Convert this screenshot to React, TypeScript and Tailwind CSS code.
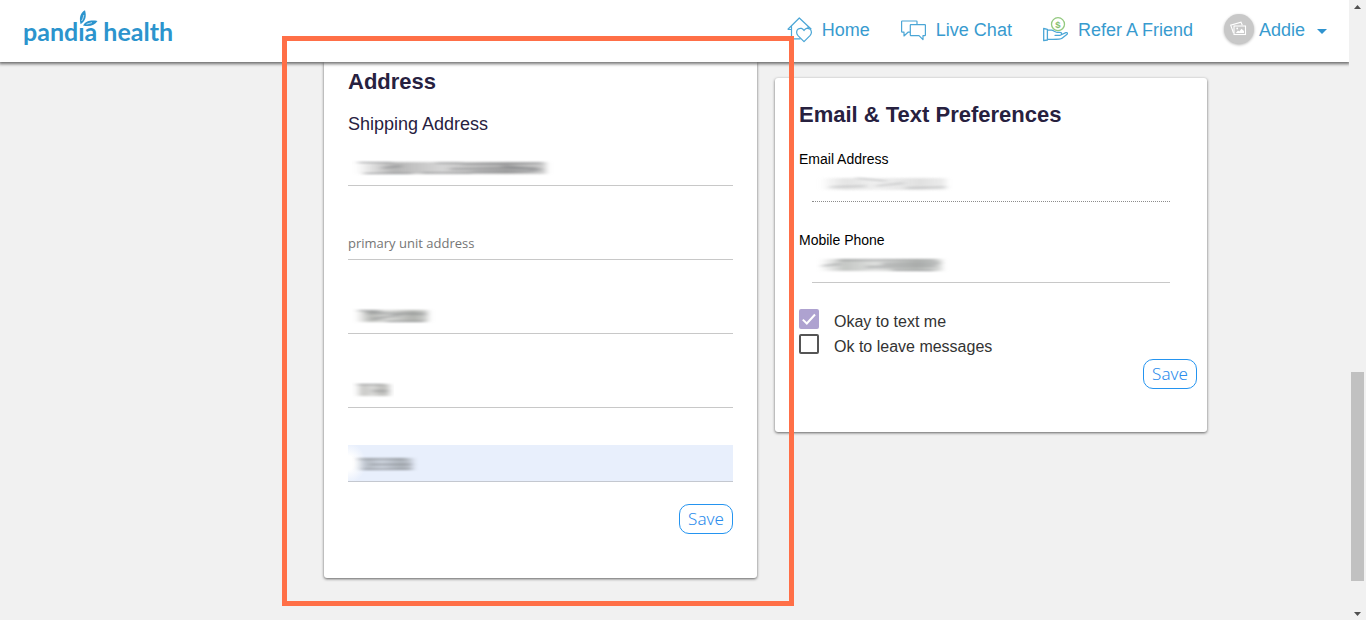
import React from "react";

const sans = "font-['Liberation_Sans',Arial,sans-serif]";

function Logo() {
  return (
    <a href="#" className="relative mt-0.5 flex items-center text-[#2c94cd]">
      <span className="font-['Lato',sans-serif] text-[25px] leading-8 font-bold">pandia health</span>
      <svg className="absolute -top-[5px] left-[56px]" width="20" height="17" viewBox="0 0 20 17" aria-hidden="true">
        <path d="M0 11H7V16H0Z" fill="#fff" />
        <path d="M6 .3C1 3 0 8 1.600 14.200 6 11.500 8 7 6 .3Z" fill="#2c94cd" />
        <path d="M18.500 11C12.500 10 7 10.500 4 15.500 10.500 17 15.500 15.500 18.500 11Z" fill="#2c94cd" />
        <path d="M4.800 5C4.400 7.500 3.600 9.500 2.600 11M13 12.600 7.500 14.200" stroke="#fff" strokeWidth=".7" fill="none" />
      </svg>
    </a>
  );
}

function HomeIcon() {
  return (
    <svg width="25" height="26" viewBox="0 0 25 26" fill="none" stroke="#4ba6d6" strokeWidth="1.200" strokeLinejoin="round" aria-hidden="true">
      <path d="M.7 12.500 12.300 1 24.300 12.300M4.500 9V21.800H13.500M.7 12.500H4.500M21 9.500V11" />
      <path d="M17 24.700 11 18.700C9 16.500 9.300 13.500 11.200 12.100 13.300 10.600 15.900 11.300 17 13.600 18.100 11.300 20.800 10.600 22.800 12.100 24.800 13.500 25 16.500 23 18.700Z" />
    </svg>
  );
}

function ChatIcon() {
  return (
    <svg width="25" height="26" viewBox="0 0 25 26" fill="none" stroke="#4ba6d6" strokeWidth="1.200" strokeLinejoin="round" aria-hidden="true">
      <path d="M16 7.500V4.500Q16 4 15.500 4H1.200Q.6 4 .6 4.600V14.500Q.6 15.200 1.200 15.200H3V19L7 15.200H9.200" />
      <path d="M9.900 7.600H23.800Q24.400 7.600 24.400 8.200V18Q24.400 18.600 23.800 18.600H22V22.600L18 18.600H9.900Q9.300 18.600 9.300 18V8.200Q9.300 7.600 9.900 7.600Z" />
    </svg>
  );
}

function ReferIcon() {
  return (
    <svg width="25" height="26" viewBox="0 0 25 26" fill="none" stroke="#4ba6d6" strokeWidth="1.300" strokeLinejoin="round" strokeLinecap="round" aria-hidden="true">
      <circle cx="15" cy="7.200" r="6.500" stroke="#93c97f" />
      <text x="15" y="10.600" textAnchor="middle" fontSize="9.500" fontWeight="700" fontFamily="Liberation Sans" fill="#84c06d" stroke="none">$</text>
      <path d="M.7 11.500 4.400 12.300V23L.7 23.700ZM4.500 13.200H8.500C10.500 13.200 12 15.300 14 15.300H17C19.200 15.300 19 18.300 17 18.300H12M18.800 17.500 22.800 15.700C24.500 15.200 25 16.500 23.800 17.400L19 21.200C17.500 22.500 14.500 22.500 4.500 22.200" />
    </svg>
  );
}

function Avatar() {
  return (
    <span className="flex h-[30px] w-[30px] rounded-full bg-[#c8c8c8] shadow-[0_1px_3px_rgba(0,0,0,0.3)]">
      <svg width="30" height="30" viewBox="0 0 30 30" fill="none" stroke="#fff" strokeWidth="1.100" aria-hidden="true">
        <path d="M9.500 19 6.700 11.200 17 8.200 18.300 11.300" />
        <rect x="10" y="12" width="11.500" height="8.500" />
        <path d="M11.800 19 14 16.500 15.300 17.500 17.500 14.800 20 17V19Z" fill="#fff" stroke="none" />
        <circle cx="13.200" cy="14.500" r=".9" fill="#fff" stroke="none" />
      </svg>
    </span>
  );
}

type SmudgeProps = { id: string; width: number; tone: string; strokes: string; opacity: number };

function Smudge({ id, width, tone, strokes, opacity }: SmudgeProps) {
  return (
    <svg className="pointer-events-none absolute bottom-[7px] left-1" width={width + 12} height="20" viewBox={`0 0 ${width + 12} 20`} fill="none" aria-hidden="true">
      <defs>
        <linearGradient id={`${id}-fade`} x1="0" x2="1" y1="0" y2="0">
          <stop offset="0" stopColor={tone} stopOpacity="0" />
          <stop offset=".2" stopColor={tone} stopOpacity=".8" />
          <stop offset=".45" stopColor={tone} stopOpacity=".45" />
          <stop offset=".8" stopColor={tone} stopOpacity=".9" />
          <stop offset="1" stopColor={tone} stopOpacity=".5" />
        </linearGradient>
        <filter id={`${id}-soft`} x="-10%" y="-50%" width="120%" height="200%">
          <feGaussianBlur stdDeviation="3 .8" />
        </filter>
      </defs>
      <g filter={`url(#${id}-soft)`} opacity={opacity}>
        <rect x="4" y="3" width={width} height="12" fill={`url(#${id}-fade)`} />
        <path d={strokes} stroke="#66696d" strokeWidth="1" strokeOpacity=".7" />
      </g>
    </svg>
  );
}

type LineInputProps = { id: string; label?: string; className?: string; placeholder?: string; smudge?: SmudgeProps };

function LineInput({ id, label, className = "border-solid border-[#c8c8c8]", placeholder, smudge }: LineInputProps) {
  return (
    <div className="relative">
      <input
        id={id}
        type="text"
        aria-label={label}
        placeholder={placeholder}
        className={`block h-[37px] w-full border-b pt-1 font-['Open_Sans',sans-serif] text-[13px] text-[#333] outline-none placeholder:text-[#757575] placeholder:opacity-100 ${className}`}
      />
      {smudge && <Smudge {...smudge} />}
    </div>
  );
}

function SaveButton() {
  return (
    <button type="button" className="h-[30px] w-[54px] rounded-[10px] border border-[#2494f0] bg-white font-['Noto_Sans',sans-serif] text-[17px] leading-7 font-light text-[#2b8cec]">
      Save
    </button>
  );
}

function AddressCard() {
  return (
    <section className="rounded-b-[3px] bg-white px-6 pt-1.5 pb-11 shadow-[0_1px_3px_rgba(0,0,0,0.6)]">
      <h2 className="text-[22px] leading-7 font-bold text-[#27213f]">Address</h2>
      <h3 className="mt-4 text-[18px] leading-6 text-[#27213f]">Shipping Address</h3>
      <form className="mt-[13px]">
        <div className="flex flex-col gap-[37px]">
          <LineInput id="street" label="Street address" smudge={{ id: "s1", width: 190, tone: "#a3a3a3", opacity: 1, strokes: "M6 3.500H40M12 14.500H60M30 9 50 7M84 4H110M98 10 186 9M110 5 190 4M120 13 184 12M70 14H120M150 7 190 11" }} />
          <LineInput id="unit" label="Unit" placeholder="primary unit address" />
          <LineInput id="city" label="City" smudge={{ id: "s2", width: 72, tone: "#a8aaa6", opacity: 1, strokes: "M6 3.500 28 4M14 6 74 7M20 12 48 8M34 14.500H72" }} />
          <LineInput id="state" label="State" smudge={{ id: "s3", width: 34, tone: "#b3b3b0", opacity: 1, strokes: "M5 3.500H32M20 10H36" }} />
          <LineInput id="zip" label="Zip code" className="border-solid border-[#c4c8d0] bg-[radial-gradient(18px_20px_at_0_50%,#ffffff_35%,#e8effc)]" smudge={{ id: "s4", width: 57, tone: "#a9afb6", opacity: 1, strokes: "M6 4H54M18 9.500H60M10 14.500 60 14" }} />
        </div>
        <div className="mt-[22px] flex justify-end">
          <SaveButton />
        </div>
      </form>
    </section>
  );
}

type CheckRowProps = { id: string; label: string; checked?: boolean };

function CheckRow({ id, label, checked = false }: CheckRowProps) {
  return (
    <div className="flex h-[25px] items-start gap-[15px]">
      <span className="relative flex h-5 w-5">
        <input id={id} type="checkbox" defaultChecked={checked} className="peer h-5 w-5 appearance-none rounded-[2px] border-2 border-[#555] bg-white checked:border-[#aea2d0] checked:bg-[#aea2d0]" />
        <svg className="pointer-events-none absolute inset-0 hidden peer-checked:block" width="20" height="20" viewBox="0 0 20 20" fill="none" stroke="#fff" strokeWidth="2" aria-hidden="true">
          <path d="M3.800 10.600 7.800 14.500 16 5.500" />
        </svg>
      </span>
      <label htmlFor={id} className="text-[16px] leading-[26px] text-[#333]">{label}</label>
    </div>
  );
}

function PreferencesCard() {
  return (
    <section className="mt-4 rounded-[3px] bg-white pb-[43px] shadow-[0_1px_3px_rgba(0,0,0,0.6)]">
      <form>
        <div className="px-6 pt-[23px]">
          <h2 className="text-[22px] leading-7 font-bold text-[#27213f]">Email &amp; Text Preferences</h2>
          <label htmlFor="email" className="mt-5 block text-[14px] leading-5 text-black">Email Address</label>
          <div className="-mt-1 px-[13px]">
            <LineInput id="email" className="border-dotted border-[#8c8c8c]" smudge={{ id: "s5", width: 126, tone: "#cfcfcf", opacity: 0.7, strokes: "M14 12 50 11M40 3 70 6M90 13 130 12M60 11 88 8" }} />
          </div>
          <label htmlFor="phone" className="mt-7 block text-[14px] leading-5 text-black">Mobile Phone</label>
          <div className="-mt-1 px-[13px]">
            <LineInput id="phone" smudge={{ id: "s6", width: 122, tone: "#b5b8b5", opacity: 1, strokes: "M6 10 24 8M22 4H120M50 11 120 10M76 14 118 14.500M66 8 124 7" }} />
          </div>
          <div className="mt-[26px]">
            <CheckRow id="text-ok" label="Okay to text me" checked />
            <CheckRow id="message-ok" label="Ok to leave messages" />
          </div>
        </div>
        <div className="flex justify-end pr-2.5">
          <SaveButton />
        </div>
      </form>
    </section>
  );
}

function Header() {
  return (
    <header className="relative z-10 flex h-[62px] items-center justify-between bg-white pr-[22px] pb-0.5 pl-[23px] shadow-[0_1px_3px_1px_rgba(0,0,0,0.55)]">
      <Logo />
      <nav className="flex items-center gap-[31px] text-[18px] leading-6 text-[#389bcf]">
        <a href="#home" className="flex items-center gap-2.5"><HomeIcon />Home</a>
        <a href="#chat" className="flex items-center gap-2.5"><ChatIcon />Live Chat</a>
        <a href="#refer" className="flex items-center gap-2.5"><ReferIcon />Refer A Friend</a>
        <button type="button" className="-mt-0.5 flex items-center gap-[5px]">
          <Avatar />
          <span className="mt-0.5">Addie</span>
          <svg className="mt-1 ml-[7px]" width="10" height="5" viewBox="0 0 10 5" aria-hidden="true"><path d="M0 0H10L5 5Z" fill="#2f93cf" /></svg>
        </button>
      </nav>
    </header>
  );
}

function ScrollRail() {
  return (
    <div className="flex w-[17px] shrink-0 flex-col items-center bg-[#f1f1f1]" aria-hidden="true">
      <svg width="17" height="17" viewBox="0 0 17 17"><path d="M5 9 8.500 5 12 9Z" fill="#505050" /></svg>
      <div className="flex-[355]" />
      <div className="w-[13px] flex-[209] bg-[#c1c1c1]" />
      <div className="flex-[22]" />
      <svg width="17" height="17" viewBox="0 0 17 17"><path d="M5 9H12L8.500 13Z" fill="#505050" /></svg>
    </div>
  );
}

export default function App() {
  return (
    <div className={`relative flex h-screen overflow-hidden bg-[#f1f1f1] ${sans}`}>
      <div className="min-w-0 flex-1 overflow-hidden">
        <Header />
        <main className="mr-[142px] ml-81 grid grid-cols-[433fr_432fr] items-start gap-[18px]">
          <AddressCard />
          <PreferencesCard />
        </main>
      </div>
      <ScrollRail />
      <div className="pointer-events-none absolute top-9 left-[282px] z-20 h-[570px] w-[512px] border-5 border-[#ff6f47]" />
    </div>
  );
}
